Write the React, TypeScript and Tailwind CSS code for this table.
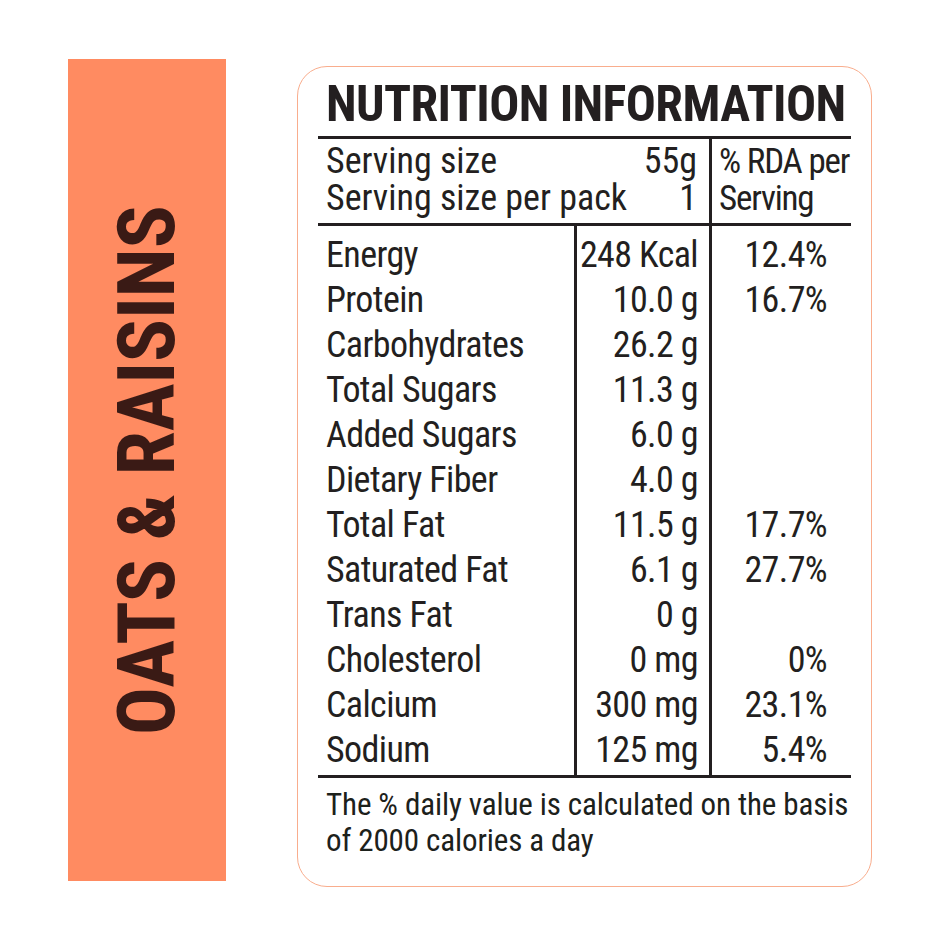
const serving = [
  { label: "Serving size", value: "55g" },
  { label: "Serving size per pack", value: "1" },
];

const nutrients = [
  { name: "Energy", amount: "248 Kcal", rda: "12.4%" },
  { name: "Protein", amount: "10.0 g", rda: "16.7%" },
  { name: "Carbohydrates", amount: "26.2 g", rda: "" },
  { name: "Total Sugars", amount: "11.3 g", rda: "" },
  { name: "Added Sugars", amount: "6.0 g", rda: "" },
  { name: "Dietary Fiber", amount: "4.0 g", rda: "" },
  { name: "Total Fat", amount: "11.5 g", rda: "17.7%" },
  { name: "Saturated Fat", amount: "6.1 g", rda: "27.7%" },
  { name: "Trans Fat", amount: "0 g", rda: "" },
  { name: "Cholesterol", amount: "0 mg", rda: "0%" },
  { name: "Calcium", amount: "300 mg", rda: "23.1%" },
  { name: "Sodium", amount: "125 mg", rda: "5.4%" },
];

const narrow =
  "font-['Roboto_Condensed','Liberation_Sans_Narrow','DejaVu_Sans_Condensed',sans-serif]";

export default function App() {
  return (
    <div className={`min-h-[940px] w-[940px] bg-white ${narrow}`}>
      <div className="flex items-start gap-[71px] pl-[68px] pt-[59px]">
        {/* flavour band */}
        <div className="flex h-[822px] w-[158px] shrink-0 items-center justify-center bg-[#ff8b61]">
          <span className="rotate-180 whitespace-nowrap text-[80px] font-bold leading-none text-[#3a1a15] [writing-mode:vertical-rl]">
            OATS &amp; RAISINS
          </span>
        </div>

        {/* nutrition card */}
        <div className="mt-[7px] h-[821px] w-[575px] shrink-0 whitespace-nowrap rounded-[30px] border-[1.5px] border-[#f9ad8d] px-[20px] pt-[12px] text-[#231f20]">
          <h1 className="mb-[6px] pl-[8px] text-[50px] font-bold leading-[51px] tracking-[-0.6px]">
            NUTRITION INFORMATION
          </h1>

          <div className="border-y-[3px] border-[#231f20] tracking-[-0.6px]">
            <div className="flex border-b-[3px] border-[#231f20] text-[36px] leading-[37px]">
              <div className="w-[394px] shrink-0 border-r-[3px] border-[#231f20] pb-[6px] pl-[8px] pr-[12px] pt-[4px] tracking-normal">
                {serving.map((s) => (
                  <div key={s.label} className="flex justify-between">
                    <span>{s.label}</span>
                    <span>{s.value}</span>
                  </div>
                ))}
              </div>
              <div className="min-w-0 flex-1 pl-[7px] pt-[4px] text-[35px] tracking-[-1.2px]">
                <div>% RDA per</div>
                <div>Serving</div>
              </div>
            </div>

            <div className="flex text-[36px] leading-[45px]">
              <div className="w-[259px] shrink-0 border-r-[3px] border-[#231f20] pb-[2px] pl-[8px] pt-[7px]">
                {nutrients.map((n) => (
                  <div key={n.name}>{n.name}</div>
                ))}
              </div>
              <div className="w-[135px] shrink-0 border-r-[3px] border-[#231f20] pb-[2px] pr-[11px] pt-[7px] text-right">
                {nutrients.map((n) => (
                  <div key={n.name}>{n.amount}</div>
                ))}
              </div>
              <div className="min-w-0 flex-1 pb-[2px] pr-[24px] pt-[7px] text-right">
                {nutrients.map((n) => (
                  <div key={n.name} className="h-[45px]">
                    {n.rda}
                  </div>
                ))}
              </div>
            </div>
          </div>

          <p className="mt-[9px] pl-[8px] text-[31px] leading-[36px] tracking-[-0.1px] text-[#1c211b]">
            The % daily value is calculated on the basis
            <br />
            of 2000 calories a day
          </p>
        </div>
      </div>
    </div>
  );
}
